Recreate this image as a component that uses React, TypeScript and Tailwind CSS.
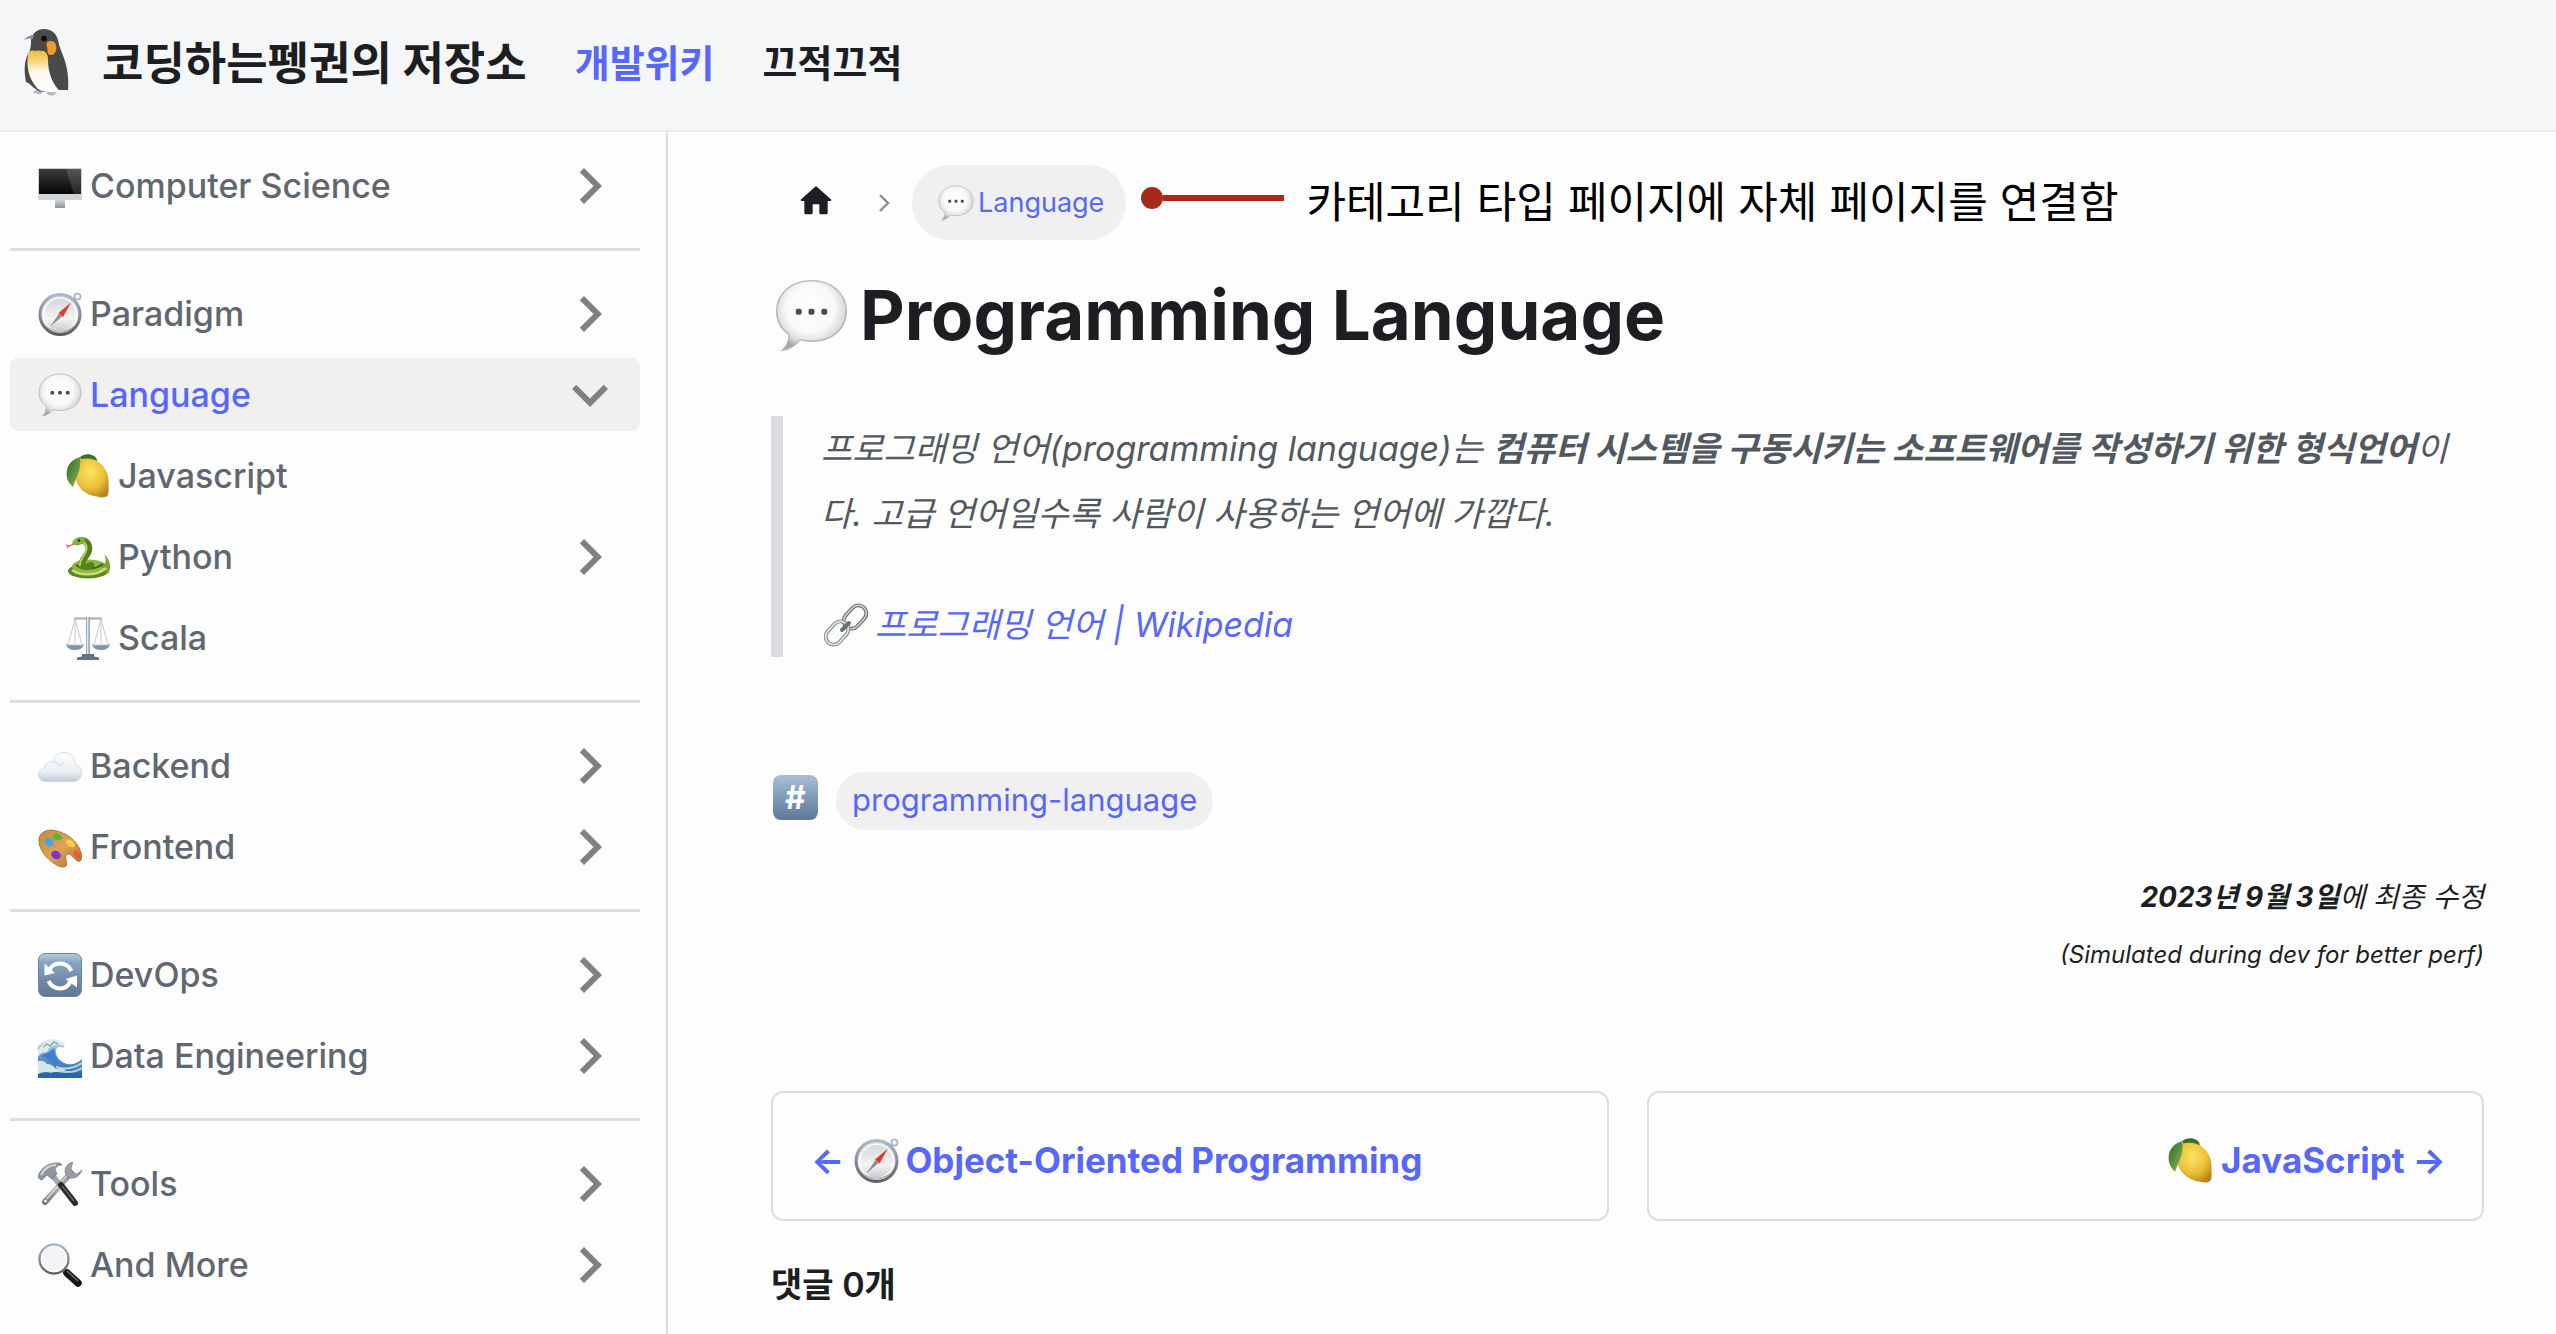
import React from "react";

type IconProps = { className?: string };

function SharedGradients() {
  return (
    <svg className="absolute size-0" aria-hidden="true">
      <defs>
        <linearGradient id="g-screen" x1="0" y1="0" x2="0" y2="1">
          <stop offset="0" stopColor="#3d3d3d" />
          <stop offset="1" stopColor="#050505" />
        </linearGradient>
        <linearGradient id="g-silver" x1="0" y1="0" x2="0" y2="1">
          <stop offset="0" stopColor="#d9dbde" />
          <stop offset="1" stopColor="#8e9399" />
        </linearGradient>
        <linearGradient id="g-rim" x1="0" y1="0" x2="0" y2="1">
          <stop offset="0" stopColor="#a9b9ca" />
          <stop offset="1" stopColor="#5d6064" />
        </linearGradient>
        <linearGradient id="g-dial" x1="0" y1="0" x2="0" y2="1">
          <stop offset="0" stopColor="#cfd1d4" />
          <stop offset="0.6" stopColor="#f4f4f4" />
          <stop offset="1" stopColor="#bcbdbf" />
        </linearGradient>
        <radialGradient id="g-bubble" cx="0.48" cy="0.4" r="0.58">
          <stop offset="0" stopColor="#ffffff" />
          <stop offset="0.6" stopColor="#f8f8f8" />
          <stop offset="0.85" stopColor="#dcdcdc" />
          <stop offset="1" stopColor="#a8a8a8" />
        </radialGradient>
        <radialGradient id="g-lemon" cx="0.45" cy="0.35" r="0.7">
          <stop offset="0" stopColor="#fbe366" />
          <stop offset="0.6" stopColor="#eac135" />
          <stop offset="1" stopColor="#b8841c" />
        </radialGradient>
        <linearGradient id="g-leaf" x1="0" y1="0" x2="1" y2="1">
          <stop offset="0" stopColor="#2f6a22" />
          <stop offset="1" stopColor="#86b95a" />
        </linearGradient>
        <linearGradient id="g-cloud" x1="0" y1="0" x2="0" y2="1">
          <stop offset="0" stopColor="#fbfcfd" />
          <stop offset="0.65" stopColor="#edf0f3" />
          <stop offset="1" stopColor="#bccbd8" />
        </linearGradient>
        <linearGradient id="g-palette" x1="0" y1="0" x2="1" y2="1">
          <stop offset="0" stopColor="#c58a3a" />
          <stop offset="0.5" stopColor="#dca553" />
          <stop offset="1" stopColor="#b06f2c" />
        </linearGradient>
        <linearGradient id="g-button" x1="0" y1="0" x2="0" y2="1">
          <stop offset="0" stopColor="#b9cbdd" />
          <stop offset="0.22" stopColor="#86a3c1" />
          <stop offset="1" stopColor="#5d7694" />
        </linearGradient>
        <linearGradient id="g-wave" x1="0" y1="0" x2="0" y2="1">
          <stop offset="0" stopColor="#cfe4e6" />
          <stop offset="0.5" stopColor="#5b93c4" />
          <stop offset="1" stopColor="#2a61ab" />
        </linearGradient>
        <linearGradient id="g-steel" x1="0" y1="0" x2="0" y2="1">
          <stop offset="0" stopColor="#7e868f" />
          <stop offset="0.5" stopColor="#b4b8be" />
          <stop offset="1" stopColor="#7b7377" />
        </linearGradient>
        <linearGradient id="g-belly" x1="0" y1="0" x2="0" y2="1">
          <stop offset="0" stopColor="#f0b93a" />
          <stop offset="0.22" stopColor="#f6d273" />
          <stop offset="0.52" stopColor="#fdf8ec" />
          <stop offset="1" stopColor="#ffffff" />
        </linearGradient>
      </defs>
    </svg>
  );
}

function Penguin({ className }: IconProps) {
  return (
    <svg viewBox="0 0 48 72" className={className} aria-hidden="true">
      <path d="M12 64c3-1.500 8-1.500 8 1s-2 2.500-4 2-5 .5-4-3zM26 65c3-2 8-2 8 0s-2 4-5 3.500-5-1.500-3-3.500z" fill="#b7b3bf" />
      <path d="M22 2c8 0 13 5 14.500 13 1 6 3 9 5 15 4 10 5.500 22 4.500 33h-9c-6 3-17 3-22 0-5-3-7-7-11-8-2-11-2-20 2-28 3-5 3-9 3-14C10.500 6 15 2 22 2z" fill="#4a4a4a" />
      <path d="M2 13c2-3 6-5 10-5l-1 4c-3-1-6-.5-9 1z" fill="#8b8b94" />
      <path d="M7 24c5-1 10-1 15 0 3 2 4 4 4 9 0 13 5 25 12 31-6 2-17 2-22-2C9 55 5 44 5.500 34c.2-4 .5-8 1.500-10z" fill="url(#g-belly)" />
      <path d="M25 15c4-2 8-1 9 3 1 3 0 8-3 9.500-3 1.500-6-.5-5.500-4 .3-3-2-6-.5-8.500z" fill="#ee9b2c" />
      <path d="M12 22c4 0 9 0 13-2v5c-5-2-9-2-13-1z" fill="#4a4a4a" />
      <circle cx="22" cy="11.500" r="2.800" fill="#0d0d0d" />
    </svg>
  );
}

function Monitor({ className }: IconProps) {
  return (
    <svg viewBox="0 0 44 44" className={className} aria-hidden="true">
      <path d="M17 35h10v9H17z" fill="url(#g-silver)" />
      <rect x="0" y="4" width="44" height="32" rx="1.500" fill="#c9ccd0" />
      <rect x="1" y="5" width="42" height="25" fill="url(#g-screen)" />
      <path d="M28 5h15v25h-7z" fill="#ffffff" opacity="0.13" />
      <rect x="0" y="30" width="44" height="6" rx="1" fill="#d2d5d8" />
    </svg>
  );
}

function Compass({ className }: IconProps) {
  return (
    <svg viewBox="0 0 44 44" className={className} aria-hidden="true">
      <circle cx="39.500" cy="4.500" r="3" fill="none" stroke="#9fb0c2" strokeWidth="1.600" />
      <circle cx="22" cy="22.500" r="20" fill="url(#g-dial)" stroke="url(#g-rim)" strokeWidth="3" />
      <circle cx="22" cy="22.500" r="16.500" fill="none" stroke="#ffffff" strokeWidth="1.500" opacity="0.8" />
      <path d="M9 35c7 5 18 6 26 0" fill="none" stroke="#a5a7aa" strokeWidth="1" />
      <path d="M21 21.500l3 3L12 35z" fill="#8e9092" />
      <path d="M20.500 21l12.500-10.500L25 25z" fill="#e2362c" />
    </svg>
  );
}

function SpeechBubble({ className }: IconProps) {
  return (
    <svg viewBox="0 0 44 44" className={className} aria-hidden="true">
      <path
        d="M22 1C34 1 43 8.500 43 19.500S34 37.500 22 37.500c-2.500 0-5-.3-7-.9C12.500 40 8.500 42.500 4.500 43c2.500-2.500 4-6 4-9.500C4 30.500 1 25.500 1 19.500 1 8.500 10 1 22 1z"
        fill="url(#g-bubble)"
        stroke="#b4b4b4"
        strokeWidth="0.800"
      />
      <rect x="12.500" y="18" width="3.600" height="3.600" rx="1.200" fill="#4c4c4c" />
      <rect x="20.200" y="18" width="3.600" height="3.600" rx="1.200" fill="#4c4c4c" />
      <rect x="27.900" y="18" width="3.600" height="3.600" rx="1.200" fill="#4c4c4c" />
    </svg>
  );
}

function Lemon({ className }: IconProps) {
  return (
    <svg viewBox="0 0 44 44" className={className} aria-hidden="true">
      <path d="M14 3c4-3.500 10-3.500 14-1 2 1 3 3 3 5l-15 1z" fill="#3c6f2a" />
      <path d="M11 7C18 3 29 4 35 10c6 6 8 13 7.500 20 0 4 .5 8-.5 11-2 3-7 3-11 1.500C23 42 15 37 11 29 8 22 8 13 11 7z" fill="url(#g-lemon)" />
      <path d="M14 3c1 6 0 12-2 17-2 5-4 9-5 13C1 28 0 22 1 16 2 10 7 5 14 3z" fill="url(#g-leaf)" />
    </svg>
  );
}

function Snake({ className }: IconProps) {
  return (
    <svg viewBox="0 0 44 44" className={className} aria-hidden="true">
      <path d="M8 9L3 11l-3-1M3 11l-2 2" fill="none" stroke="#e0626c" strokeWidth="1.200" />
      <ellipse cx="22" cy="36" rx="20" ry="7.500" fill="#5c8526" />
      <ellipse cx="23" cy="31.500" rx="17" ry="7" fill="#8db83b" />
      <path d="M35 31c5-2 6-6 3-12 6 5 8 14 4 20z" fill="#7ba334" />
      <path d="M6 35c8 6 25 6 34-2" fill="none" stroke="#c6dc77" strokeWidth="2.600" />
      <path d="M10 30c7 5 19 5 27-1" fill="none" stroke="#41631c" strokeWidth="2" />
      <path d="M11 7c6-4 12 0 12 7 0 7-9 10-7 17 5 2 10-1 9-1" fill="none" stroke="#55801f" strokeWidth="6.500" strokeLinecap="round" />
      <path d="M12 7.500c5-2.500 9 1 8.500 6.500C20 20 13 24 14 31" fill="none" stroke="#b5d05c" strokeWidth="2" />
      <path d="M6 8.500c1-4 5-7 10-6.500 3 1 4 4 2 6-3 2-9 3-12 .5z" fill="#86b03a" />
      <circle cx="13" cy="5.500" r="1.200" fill="#1f2a0e" />
    </svg>
  );
}

function Scales({ className }: IconProps) {
  return (
    <svg viewBox="0 0 44 44" className={className} aria-hidden="true">
      <path d="M8 2.500h28" stroke="#a9b4bf" strokeWidth="2.200" />
      <path d="M9 3L2 29M9 3l7 26M35 3l-7 26M35 3l7 26M9 3v24M35 3v24" stroke="#c8ced4" strokeWidth="1" />
      <path d="M0 28h18c-1 4-4 6-9 6s-8-2-9-6zM26 28h18c-1 4-4 6-9 6s-8-2-9-6z" fill="#8493a1" />
      <path d="M1 28.500h16M27 28.500h16" stroke="#dfe4e9" strokeWidth="1.400" />
      <path d="M20 1h4v39h-4z" fill="#9fadb9" />
      <path d="M21 1h1.300v39H21z" fill="#e1e7ec" />
      <path d="M16 38h12v2.500l5 1V44H11v-2.500l5-1z" fill="#5f7384" />
    </svg>
  );
}

function Cloud({ className }: IconProps) {
  return (
    <svg viewBox="0 0 44 44" className={className} aria-hidden="true">
      <path
        d="M8 37.500c-9 0-10-12-1.500-13.500C7 19.500 11 17 15 18c1-6 6-10 12-9.500 6 .5 10 5 9.500 11 4.500 1 7 5 7 9 0 5-3 9-7.500 9z"
        fill="url(#g-cloud)"
        stroke="#cbd3da"
        strokeWidth="0.800"
      />
      <path d="M15 18c4 0 6 3 6 5 0-2 3-4 6-3" fill="none" stroke="#d3dae0" strokeWidth="1" />
    </svg>
  );
}

function Palette({ className }: IconProps) {
  return (
    <svg viewBox="0 0 44 44" className={className} aria-hidden="true">
      <path
        d="M1 14C2 7 9 4 17 5.500c10 2 19 8 23.500 16C44 28 45 34 42 36c-3 1-5-2-8-5-2-2-5-3-6 0-1 4 2 7 0 10-2 2-7 1-11-2C8 34 0 23 1 14z"
        fill="url(#g-palette)"
        stroke="#a56a2a"
        strokeWidth="0.800"
      />
      <ellipse cx="11" cy="17" rx="4" ry="5" transform="rotate(-35 11 17)" fill="#4aa6e0" />
      <ellipse cx="19.500" cy="12" rx="4.600" ry="3.300" transform="rotate(20 19.500 12)" fill="#57b53a" />
      <ellipse cx="32.500" cy="18.500" rx="4.600" ry="3" transform="rotate(35 32.500 18.500)" fill="#f5d33c" />
      <ellipse cx="39" cy="29.500" rx="4.400" ry="2.800" transform="rotate(55 39 29.500)" fill="#e9583f" />
      <ellipse cx="18" cy="30" rx="5" ry="4" transform="rotate(30 18 30)" fill="#8a2bd0" />
    </svg>
  );
}

function CycleButton({ className }: IconProps) {
  return (
    <svg viewBox="0 0 44 44" className={className} aria-hidden="true">
      <rect x="0.500" y="0.500" width="43" height="43" rx="6.500" fill="url(#g-button)" stroke="#6c86a4" />
      <path d="M11 18C13 12.500 17 10.500 22 10.500c5 0 9 2.500 11.500 7.500" fill="none" stroke="#ffffff" strokeWidth="4" />
      <path d="M33 27C31 33 27 35.500 22 35.500c-5 0-9-2.500-11.500-7.500" fill="none" stroke="#ffffff" strokeWidth="4" />
      <path d="M6.500 10.500V22.500l10.500-2.500z" fill="#ffffff" />
      <path d="M39 34.500V22.500L27.500 26z" fill="#ffffff" />
    </svg>
  );
}

function Wave({ className }: IconProps) {
  return (
    <svg viewBox="0 0 44 44" className={className} aria-hidden="true">
      <path d="M0 13C4 7 12 4 20 6c4 1 7 4 6 8-3-2-7-2-8 2-1 6 4 12 11 14 6 1 11-1 15-5v19H0z" fill="url(#g-wave)" />
      <path d="M0 17C3 9 10 5 17 5.500c6 .5 10 4 10 8-3-3-7-4-10-2-4 0-7 3-8 7-3-1-6 0-9 4z" fill="#dcedec" />
      <path d="M5 13l4-3 3 2 4-4 4 2" fill="none" stroke="#88adba" strokeWidth="1.500" />
      <path d="M3 22c5-3 10-4 13-8 1 6 2 12 8 16-7 0-12-2-15-5z" fill="#3f7fd0" />
      <path d="M0 27c4-1 7 0 9 3 4 0 7 2 9 5 3-2 7-1 10 1-5 3-11 1-15 3-4-2-9-1-13 1z" fill="#d3e6e6" />
      <path d="M18 33c9 3 18 1 26-4M20 37c9 2 17 1 24-3" fill="none" stroke="#b4d3dc" strokeWidth="2" />
      <path d="M0 41c12-4 28-1 44-2v5H0z" fill="#2d62aa" />
    </svg>
  );
}

function Tools({ className }: IconProps) {
  return (
    <svg viewBox="0 0 44 44" className={className} aria-hidden="true">
      <path d="M33 11L7 40" stroke="url(#g-steel)" strokeWidth="6" strokeLinecap="round" />
      <path d="M32 10L7 39" stroke="#d3d5d9" strokeWidth="1.600" />
      <circle cx="7.500" cy="39" r="2" fill="#f2f2f2" stroke="#77777c" />
      <path d="M35 0c-5 1-8 5-8 9 0 3 2 6 5 7 5 1 10-2 12-8l-5 4-5-2-1-4z" fill="#9a9fa6" stroke="#70757c" strokeWidth="0.600" />
      <path d="M14 13l9 11" stroke="#a3a5ab" strokeWidth="5.500" />
      <path d="M23 23l14 18" stroke="#2b2b2b" strokeWidth="6" strokeLinecap="round" />
      <path d="M24 24l12 15" stroke="#777777" strokeWidth="1.200" />
      <path d="M0 14C3 6 10 0 22 1l2 2c-4 0-6 2-7 4l2 5-5 5-5-4-5 5c-2 0-4-2-4-4z" fill="#8d959e" stroke="#656c74" strokeWidth="0.600" />
      <path d="M3 13C6 7 11 3 18 3" fill="none" stroke="#d6dade" strokeWidth="1.800" />
    </svg>
  );
}

function Magnifier({ className }: IconProps) {
  return (
    <svg viewBox="0 0 44 44" className={className} aria-hidden="true">
      <path d="M24 26l5 5" stroke="#9a9da1" strokeWidth="4" />
      <path d="M29 30l11 10" stroke="#161616" strokeWidth="7.500" strokeLinecap="round" />
      <path d="M29 28l11 10" stroke="#6d6d6d" strokeWidth="1.500" />
      <circle cx="16" cy="16" r="14.500" fill="#f3f4f5" stroke="url(#g-rim)" strokeWidth="2.400" />
      <circle cx="16" cy="16" r="12.600" fill="none" stroke="#ffffff" strokeWidth="1.200" />
    </svg>
  );
}

function ChainLink({ className }: IconProps) {
  return (
    <svg viewBox="0 0 50 44" className={className} aria-hidden="true">
      <g fill="none">
        <rect x="-8" y="-13" width="16" height="26" rx="8" transform="translate(34 14) rotate(42)" stroke="#6d6a6a" strokeWidth="3.800" />
        <rect x="-8" y="-13" width="16" height="26" rx="8" transform="translate(34 14) rotate(42)" stroke="#d2d0d0" strokeWidth="1.600" />
        <rect x="-8" y="-13" width="16" height="26" rx="8" transform="translate(16 30) rotate(42)" stroke="#83888d" strokeWidth="3.800" />
        <rect x="-8" y="-13" width="16" height="26" rx="8" transform="translate(16 30) rotate(42)" stroke="#dde3e8" strokeWidth="1.800" />
        <path d="M21 27l7-7" stroke="#6a6f75" strokeWidth="4" strokeLinecap="round" />
      </g>
    </svg>
  );
}

function HomeIcon({ className }: IconProps) {
  return (
    <svg viewBox="0 0 24 24" className={className} aria-hidden="true">
      <path
        fill="currentColor"
        d="M10 19v-5h4v5c0 .55.45 1 1 1h3c.55 0 1-.45 1-1v-7h1.700c.46 0 .68-.57.33-.87L12.670 3.600c-.38-.34-.96-.34-1.340 0l-8.360 7.530c-.34.3-.13.87.33.87H5v7c0 .55.45 1 1 1h3c.55 0 1-.45 1-1z"
      />
    </svg>
  );
}

function Caret({ open = false }: { open?: boolean }) {
  return (
    <svg viewBox="0 0 24 24" className="size-[72px] shrink-0 text-[#808080]" aria-hidden="true">
      <path
        fill="currentColor"
        d={open ? "M7.410 8.590L12 13.170l4.590-4.580L18 10l-6 6-6-6z" : "M8.590 16.590L13.170 12 8.590 7.410 10 6l6 6-6 6z"}
      />
    </svg>
  );
}

type Item = {
  label: string;
  Icon: (props: IconProps) => React.ReactElement;
  expandable?: boolean;
  open?: boolean;
  nested?: boolean;
};

const groups: Item[][] = [
  [{ label: "Computer Science", Icon: Monitor, expandable: true }],
  [
    { label: "Paradigm", Icon: Compass, expandable: true },
    { label: "Language", Icon: SpeechBubble, expandable: true, open: true },
    { label: "Javascript", Icon: Lemon, nested: true },
    { label: "Python", Icon: Snake, expandable: true, nested: true },
    { label: "Scala", Icon: Scales, nested: true },
  ],
  [
    { label: "Backend", Icon: Cloud, expandable: true },
    { label: "Frontend", Icon: Palette, expandable: true },
  ],
  [
    { label: "DevOps", Icon: CycleButton, expandable: true },
    { label: "Data Engineering", Icon: Wave, expandable: true },
  ],
  [
    { label: "Tools", Icon: Tools, expandable: true },
    { label: "And More", Icon: Magnifier, expandable: true },
  ],
];

function SidebarItem({ label, Icon, expandable, open, nested }: Item) {
  const content = (
    <>
      <Icon className="size-11 shrink-0" />
      <span className="flex-1 text-left">{label}</span>
      {expandable && <Caret open={open} />}
    </>
  );
  return (
    <li className={nested ? "pl-7" : ""}>
      {expandable ? (
        <button
          type="button"
          aria-expanded={!!open}
          className={
            open
              ? "flex h-[73px] w-full items-center gap-2 rounded-lg bg-[#f0f0f0] pr-3.5 pl-7 font-medium text-[#5867fb]"
              : "flex h-[73px] w-full items-center gap-2 rounded-lg pr-3.5 pl-7 font-medium"
          }
        >
          {content}
        </button>
      ) : (
        <a href="#" className="flex h-[73px] items-center gap-2 rounded-lg pr-3.5 pl-7 font-medium">
          {content}
        </a>
      )}
    </li>
  );
}

function Sidebar() {
  return (
    <aside className="w-[668px] shrink-0 border-r-2 border-[#dadde1] pt-[17px] pr-[26px] pl-2.5 text-[34px] leading-none text-[#606770]">
      <nav aria-label="Docs">
        {groups.map((items, i) => (
          <React.Fragment key={items[0].label}>
            {i > 0 && <hr className="my-[26px] border-t-[3px] border-[#dcdee3]" />}
            <ul className="flex flex-col gap-2">
              {items.map((item) => (
                <SidebarItem key={item.label} {...item} />
              ))}
            </ul>
          </React.Fragment>
        ))}
      </nav>
    </aside>
  );
}

export default function App() {
  return (
    <div className="flex min-h-screen flex-col bg-[#fdfdfd] font-[Inter,'Noto_Sans_CJK_KR',sans-serif] text-[#1c1e21]">
      <SharedGradients />
      <header className="flex h-[132px] items-center border-b-2 border-[#eaecec] bg-[#f5f6f8] pb-1 pl-[22px]">
        <a href="#" className="flex items-center">
          <Penguin className="h-[72px] w-12" />
          <b className="ml-8 text-[45px] leading-none">코딩하는펭권의 저장소</b>
        </a>
        <nav aria-label="Main" className="ml-12 flex items-center gap-12 text-[38px] leading-none font-bold">
          <a href="#" className="text-[#5867fb]">개발위키</a>
          <a href="#">끄적끄적</a>
        </nav>
      </header>

      <div className="flex flex-1">
        <Sidebar />
        <main className="min-w-0 flex-1 pt-[33px] pr-[72px] pl-[103px]">
          <div className="flex items-center">
            <nav aria-label="Breadcrumbs" className="flex items-center">
              <a href="#" aria-label="Home" className="ml-[25px] pb-1">
                <HomeIcon className="size-10" />
              </a>
              <svg viewBox="0 0 24 24" className="mr-4 ml-9 size-6 text-[#8d8d8d]" aria-hidden="true">
                <path d="M8 4l8 8-8 8" fill="none" stroke="currentColor" strokeWidth="2.400" />
              </svg>
              <a href="#" className="flex h-[75px] items-center gap-1 rounded-full bg-[#f0f0f0] pr-[22px] pl-[26px] text-[27px] leading-none text-[#5867fb]">
                <SpeechBubble className="size-9" />
                Language
              </a>
            </nav>
            <div className="ml-[15px] flex items-center gap-[22px]">
              <div className="flex items-center pb-2.5">
                <span className="size-[22px] rounded-full bg-[#a52a17]" />
                <span className="h-1.5 w-[121px] bg-[#a52a17]" />
              </div>
              <p className="text-[43px] leading-none whitespace-nowrap text-black">카테고리 타입 페이지에 자체 페이지를 연결함</p>
            </div>
          </div>

          <h1 className="mt-[30px] flex items-center gap-3 text-[69px] leading-[90px] font-bold">
            <SpeechBubble className="ml-1 size-[73px]" />
            Programming Language
          </h1>

          <blockquote className="mt-14 border-l-[12px] border-[#dadce0] pr-5 pl-[38px] text-[34px] leading-[65px] text-[#525860] italic">
            <p>
              프로그래밍 언어(programming language)는{" "}
              <strong>컴퓨터 시스템을 구동시키는 소프트웨어를 작성하기 위한 형식언어</strong>이다. 고급 언어일수록 사람이 사용하는 언어에 가깝다.
            </p>
            <p className="mt-[46px] flex items-center gap-1">
              <ChainLink className="h-11 w-[50px]" />
              <a href="#" className="text-[#5867fb]">프로그래밍 언어 | Wikipedia</a>
            </p>
          </blockquote>

          <div className="mt-[115px] flex items-start gap-[18px]">
            <span className="mt-[3px] ml-0.5 flex size-[45px] items-center justify-center rounded-lg bg-linear-to-b from-[#a9bfd6] via-[#7f9bb8] to-[#5f7795] text-[32px] leading-none font-bold text-white">
              #
            </span>
            <a href="#" className="flex h-[58px] items-center rounded-full bg-[#f0f0f0] px-4 pb-1 text-[31px] leading-none text-[#5867fb]">
              programming-language
            </a>
          </div>

          <div className="mt-[38px] text-right text-[28px] leading-[58px] italic">
            <p>
              <b>2023년 9월 3일</b>에 최종 수정
            </p>
            <p className="text-2xl leading-[58px]">(Simulated during dev for better perf)</p>
          </div>

          <nav aria-label="Pages" className="mt-[107px] grid grid-cols-2 gap-[38px] text-[35px] leading-none font-bold text-[#5867fb]">
            <a href="#" className="flex h-[130px] items-center rounded-xl border-2 border-[#dadde1] px-[38px] pt-2">
              <span>←</span>
              <Compass className="mr-1.5 ml-2.5 size-[45px]" />
              Object-Oriented Programming
            </a>
            <a href="#" className="flex h-[130px] items-center justify-end rounded-xl border-2 border-[#dadde1] px-9 pt-2">
              <Lemon className="mr-2 size-[45px]" />
              JavaScript
              <span className="ml-2">→</span>
            </a>
          </nav>

          <h2 className="mt-[34px] text-[34px] leading-[60px] font-semibold">댓글 0개</h2>
        </main>
      </div>
    </div>
  );
}
